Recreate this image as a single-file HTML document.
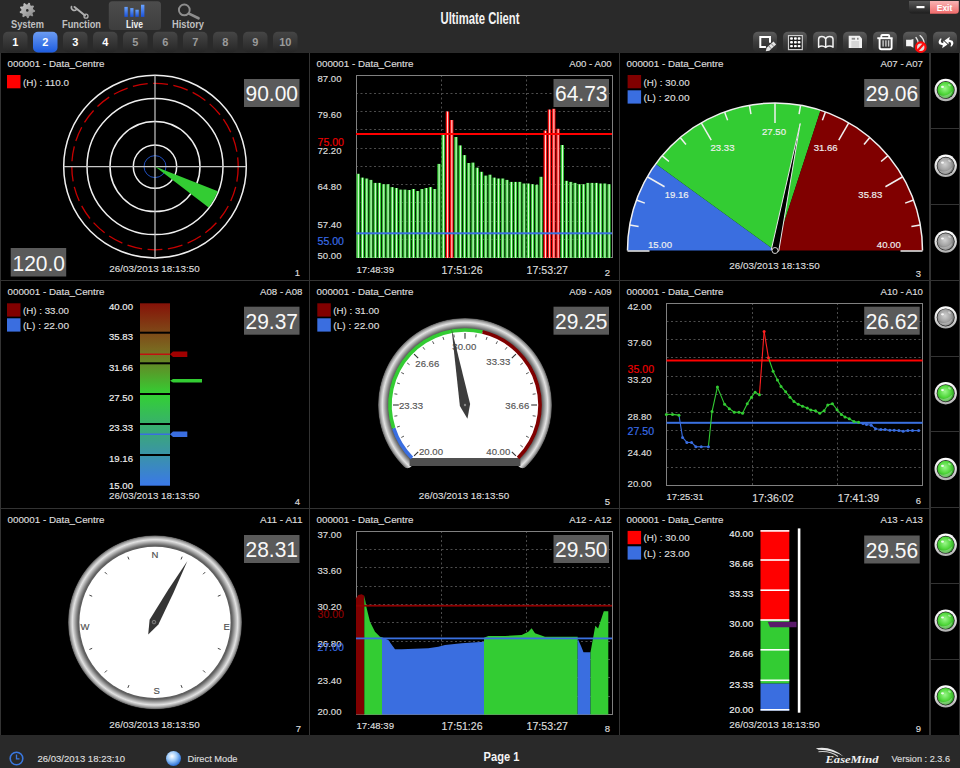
<!DOCTYPE html>
<html><head><meta charset="utf-8"><style>
html,body{margin:0;padding:0;background:#000;width:960px;height:768px;overflow:hidden}
svg{display:block;font-family:"Liberation Sans", sans-serif}
</style></head><body>
<svg width="960" height="768" viewBox="0 0 960 768">
<defs><linearGradient id="ggear" x1="0" y1="0" x2="1" y2="1"><stop offset="0" stop-color="#d0d0d0"/><stop offset="1" stop-color="#808080"/></linearGradient><linearGradient id="gtab" x1="0" y1="0" x2="0" y2="1"><stop offset="0" stop-color="#4c4c4c"/><stop offset="1" stop-color="#3e3e3e"/></linearGradient><linearGradient id="gblue" x1="0" y1="0" x2="0" y2="1"><stop offset="0" stop-color="#6aa4ff"/><stop offset="1" stop-color="#1a50d8"/></linearGradient><linearGradient id="gbtn" x1="0" y1="0" x2="0" y2="1"><stop offset="0" stop-color="#464646"/><stop offset="1" stop-color="#262626"/></linearGradient><linearGradient id="gbtnb" x1="0" y1="0" x2="0" y2="1"><stop offset="0" stop-color="#6c9cf2"/><stop offset="1" stop-color="#1d5ce0"/></linearGradient><linearGradient id="gmin" x1="0" y1="0" x2="0" y2="1"><stop offset="0" stop-color="#5a5a5a"/><stop offset="1" stop-color="#1e1e1e"/></linearGradient><linearGradient id="gexit" x1="0" y1="0" x2="0" y2="1"><stop offset="0" stop-color="#f8b4b4"/><stop offset="1" stop-color="#f06a6a"/></linearGradient><linearGradient id="gtb" x1="0" y1="0" x2="0" y2="1"><stop offset="0" stop-color="#5c5c5c"/><stop offset="0.5" stop-color="#3c3c3c"/><stop offset="1" stop-color="#2a2a2a"/></linearGradient><radialGradient id="gledg" cx="0.45" cy="0.4" r="0.6"><stop offset="0" stop-color="#9af78a"/><stop offset="0.6" stop-color="#4fd63a"/><stop offset="1" stop-color="#2a9a20"/></radialGradient><radialGradient id="gledo" cx="0.45" cy="0.4" r="0.6"><stop offset="0" stop-color="#d0d0d0"/><stop offset="0.6" stop-color="#a2a2a2"/><stop offset="1" stop-color="#6a6a6a"/></radialGradient><linearGradient id="gring" x1="0" y1="0" x2="0" y2="1"><stop offset="0" stop-color="#ffffff"/><stop offset="0.5" stop-color="#e0e0e0"/><stop offset="1" stop-color="#b0b0b0"/></linearGradient><linearGradient id="gbarg" x1="0" y1="0" x2="1" y2="0"><stop offset="0" stop-color="#1f9a1f"/><stop offset="0.28" stop-color="#3ad03a"/><stop offset="0.55" stop-color="#eaffea"/><stop offset="0.8" stop-color="#3ad03a"/><stop offset="1" stop-color="#1f9a1f"/></linearGradient><linearGradient id="gbarr" x1="0" y1="0" x2="1" y2="0"><stop offset="0" stop-color="#e00000"/><stop offset="0.28" stop-color="#ff2020"/><stop offset="0.55" stop-color="#ffeaea"/><stop offset="0.8" stop-color="#ff2020"/><stop offset="1" stop-color="#e00000"/></linearGradient><linearGradient id="gvb" x1="0" y1="0" x2="0" y2="1"><stop offset="0" stop-color="#861208"/><stop offset="0.25" stop-color="#7a6820"/><stop offset="0.5" stop-color="#33d033"/><stop offset="0.75" stop-color="#3aa08a"/><stop offset="1" stop-color="#3a78e8"/></linearGradient><radialGradient id="gdial" cx="0.5" cy="0.5" r="0.5"><stop offset="0.86" stop-color="#777"/><stop offset="0.9" stop-color="#d8d8d8"/><stop offset="0.95" stop-color="#bdbdbd"/><stop offset="1" stop-color="#555"/></radialGradient><radialGradient id="gdring" gradientUnits="userSpaceOnUse" cx="465" cy="405" r="87"><stop offset="0.868" stop-color="#5a5a5a"/><stop offset="0.886" stop-color="#626262"/><stop offset="0.909" stop-color="#909090"/><stop offset="0.932" stop-color="#c0c0c0"/><stop offset="0.95" stop-color="#e2e2e2"/><stop offset="0.975" stop-color="#a8a8a8"/><stop offset="0.992" stop-color="#707070"/><stop offset="1" stop-color="#282828"/></radialGradient><radialGradient id="gcomp" gradientUnits="userSpaceOnUse" cx="155" cy="622.3" r="87"><stop offset="0.868" stop-color="#5a5a5a"/><stop offset="0.886" stop-color="#626262"/><stop offset="0.909" stop-color="#909090"/><stop offset="0.932" stop-color="#c0c0c0"/><stop offset="0.95" stop-color="#e2e2e2"/><stop offset="0.975" stop-color="#a8a8a8"/><stop offset="0.992" stop-color="#707070"/><stop offset="1" stop-color="#282828"/></radialGradient><radialGradient id="gglobe" cx="0.4" cy="0.35" r="0.65"><stop offset="0" stop-color="#ffffff"/><stop offset="0.5" stop-color="#9ac8f8"/><stop offset="1" stop-color="#2a70d8"/></radialGradient></defs>
<rect x="0" y="0" width="960" height="53" fill="#2a2a2a"/>
<rect x="0" y="52" width="960" height="1" fill="#2b2b2b"/>
<rect x="0" y="53" width="960" height="682" fill="#000"/>
<rect x="0" y="735" width="960" height="33" fill="#292929"/>
<rect x="0" y="53" width="1" height="682" fill="#333"/>
<rect x="309" y="53" width="1" height="682" fill="#333"/>
<rect x="619" y="53" width="1" height="682" fill="#333"/>
<rect x="929" y="53" width="1" height="682" fill="#333"/>
<rect x="930" y="53" width="1" height="682" fill="#333"/>
<rect x="959" y="53" width="1" height="682" fill="#333"/>
<rect x="0" y="280" width="930" height="1" fill="#333"/>
<rect x="0" y="508" width="930" height="1" fill="#333"/>
<rect x="930" y="128" width="30" height="1" fill="#333"/>
<rect x="930" y="204" width="30" height="1" fill="#333"/>
<rect x="930" y="280" width="30" height="1" fill="#333"/>
<rect x="930" y="356" width="30" height="1" fill="#333"/>
<rect x="930" y="431" width="30" height="1" fill="#333"/>
<rect x="930" y="507" width="30" height="1" fill="#333"/>
<rect x="930" y="583" width="30" height="1" fill="#333"/>
<rect x="930" y="659" width="30" height="1" fill="#333"/>
<polygon points="35.10,10.40 34.98,11.75 32.94,12.45 32.50,13.40 33.28,15.41 32.31,16.38 30.30,15.60 29.35,16.04 28.65,18.08 27.30,18.20 26.26,16.31 25.25,16.04 23.40,17.15 22.29,16.38 22.70,14.26 22.10,13.40 19.97,13.07 19.62,11.75 21.30,10.40 21.39,9.36 19.97,7.73 20.55,6.50 22.70,6.54 23.44,5.80 23.40,3.65 24.63,3.07 26.26,4.49 27.30,4.40 28.65,2.72 29.97,3.07 30.30,5.20 31.16,5.80 33.28,5.39 34.05,6.50 32.94,8.35 33.21,9.36" fill="url(#ggear)"/>
<circle cx="27.3" cy="10.4" r="1.3" fill="#2a2a2a"/>
<text x="27.5" y="28" font-size="11" fill="#c0c0c0" text-anchor="middle" font-weight="bold" textLength="33" lengthAdjust="spacingAndGlyphs">System</text>
<g stroke="#b0b0b0" fill="none" stroke-linecap="round"><line x1="74.5" y1="7" x2="85" y2="15.5" stroke-width="2"/><path d="M71.5 6.5 A3 3 0 0 0 76.5 9.5" stroke-width="1.6"/><circle cx="86" cy="16.2" r="2" stroke-width="1.3"/></g>
<text x="81.5" y="27.5" font-size="11" fill="#c0c0c0" text-anchor="middle" font-weight="bold" textLength="39" lengthAdjust="spacingAndGlyphs">Function</text>
<rect x="108.8" y="1.3" width="52.2" height="28.7" rx="3.5" fill="url(#gtab)"/>
<rect x="124.4" y="6.9" width="3.3499999999999943" height="9.999999999999998" fill="url(#gblue)"/>
<rect x="130.25" y="8.1" width="3.25" height="8.799999999999999" fill="url(#gblue)"/>
<rect x="135.4" y="9.75" width="3.3499999999999943" height="7.149999999999999" fill="url(#gblue)"/>
<rect x="141.0" y="4.75" width="3.4000000000000057" height="12.149999999999999" fill="url(#gblue)"/>
<text x="134.5" y="27.5" font-size="11" fill="#f0f0f0" text-anchor="middle" font-weight="bold" textLength="17" lengthAdjust="spacingAndGlyphs">Live</text>
<g stroke="#8e8e8e" fill="none"><circle cx="184.3" cy="9.9" r="5.4" stroke-width="1.9"/><line x1="189" y1="13.6" x2="198.5" y2="18.3" stroke-width="2.7" stroke-linecap="round"/></g>
<text x="188" y="27.5" font-size="11" fill="#c0c0c0" text-anchor="middle" font-weight="bold" textLength="32" lengthAdjust="spacingAndGlyphs">History</text>
<text x="480" y="24.4" font-size="16.5" fill="#f4f4f4" text-anchor="middle" font-weight="bold" textLength="79" lengthAdjust="spacingAndGlyphs">Ultimate Client</text>
<rect x="3" y="31.7" width="24.5" height="20.8" rx="5" fill="url(#gbtn)"/>
<text x="15.25" y="46" font-size="11" fill="#ffffff" text-anchor="middle" font-weight="bold">1</text>
<rect x="33" y="31.7" width="24.5" height="20.8" rx="5" fill="url(#gbtnb)"/>
<text x="45.25" y="46" font-size="11" fill="#ffffff" text-anchor="middle" font-weight="bold">2</text>
<rect x="63" y="31.7" width="24.5" height="20.8" rx="5" fill="url(#gbtn)"/>
<text x="75.25" y="46" font-size="11" fill="#ffffff" text-anchor="middle" font-weight="bold">3</text>
<rect x="93" y="31.7" width="24.5" height="20.8" rx="5" fill="url(#gbtn)"/>
<text x="105.25" y="46" font-size="11" fill="#ffffff" text-anchor="middle" font-weight="bold">4</text>
<rect x="123" y="31.7" width="24.5" height="20.8" rx="5" fill="url(#gbtn)"/>
<text x="135.25" y="46" font-size="11" fill="#9a9a9a" text-anchor="middle" font-weight="bold">5</text>
<rect x="153" y="31.7" width="24.5" height="20.8" rx="5" fill="url(#gbtn)"/>
<text x="165.25" y="46" font-size="11" fill="#9a9a9a" text-anchor="middle" font-weight="bold">6</text>
<rect x="183" y="31.7" width="24.5" height="20.8" rx="5" fill="url(#gbtn)"/>
<text x="195.25" y="46" font-size="11" fill="#9a9a9a" text-anchor="middle" font-weight="bold">7</text>
<rect x="213" y="31.7" width="24.5" height="20.8" rx="5" fill="url(#gbtn)"/>
<text x="225.25" y="46" font-size="11" fill="#9a9a9a" text-anchor="middle" font-weight="bold">8</text>
<rect x="243" y="31.7" width="24.5" height="20.8" rx="5" fill="url(#gbtn)"/>
<text x="255.25" y="46" font-size="11" fill="#9a9a9a" text-anchor="middle" font-weight="bold">9</text>
<rect x="273" y="31.7" width="24.5" height="20.8" rx="5" fill="url(#gbtn)"/>
<text x="285.25" y="46" font-size="11" fill="#9a9a9a" text-anchor="middle" font-weight="bold">10</text>
<path d="M909 1 H930 V13.5 H912 Q909 13.5 909 10.5 Z" fill="url(#gmin)"/>
<path d="M930 1 H958.8 V10.5 Q958.8 13.8 955.5 13.8 H930 Z" fill="url(#gexit)"/>
<rect x="916.5" y="6" width="8" height="2.2" fill="#ffffff"/>
<text x="944.5" y="10.6" font-size="9" fill="#ffffff" text-anchor="middle" font-weight="bold" textLength="15.5" lengthAdjust="spacingAndGlyphs">Exit</text>
<rect x="753" y="31.8" width="24" height="20.7" rx="5" fill="url(#gtb)"/>
<rect x="783" y="31.8" width="24" height="20.7" rx="5" fill="url(#gtb)"/>
<rect x="813" y="31.8" width="24" height="20.7" rx="5" fill="url(#gtb)"/>
<rect x="843" y="31.8" width="24" height="20.7" rx="5" fill="url(#gtb)"/>
<rect x="873" y="31.8" width="24" height="20.7" rx="5" fill="url(#gtb)"/>
<rect x="903" y="31.8" width="24" height="20.7" rx="5" fill="url(#gtb)"/>
<rect x="933" y="31.8" width="24" height="20.7" rx="5" fill="url(#gtb)"/>
<path d="M770 42.8 V37.1 H760.3 V47.1 H765.9" fill="none" stroke="#fff" stroke-width="2"/>
<path d="M765.75 51.25 L766.6 47.76 L773.5 41.6 L776.1 44.6 L769.3 50.7 Z" fill="#e6e6e6"/>
<path d="M768.8 46.0 L771.4 48.9 M771.3 43.7 L773.9 46.6" stroke="#555" stroke-width="0.7"/>
<rect x="788.5" y="35.6" width="13.8" height="14" fill="#1e1e1e" stroke="#cfcfcf" stroke-width="1.2"/>
<rect x="790.1" y="37.3" width="2.8" height="2.4" rx="0.8" fill="#fff"/>
<rect x="790.1" y="41.099999999999994" width="2.8" height="2.4" rx="0.8" fill="#fff"/>
<rect x="790.1" y="44.9" width="2.8" height="2.4" rx="0.8" fill="#fff"/>
<rect x="794.0" y="37.3" width="2.8" height="2.4" rx="0.8" fill="#fff"/>
<rect x="794.0" y="41.099999999999994" width="2.8" height="2.4" rx="0.8" fill="#fff"/>
<rect x="794.0" y="44.9" width="2.8" height="2.4" rx="0.8" fill="#fff"/>
<rect x="797.7" y="37.3" width="2.8" height="2.4" rx="0.8" fill="#fff"/>
<rect x="797.7" y="41.099999999999994" width="2.8" height="2.4" rx="0.8" fill="#fff"/>
<rect x="797.7" y="44.9" width="2.8" height="2.4" rx="0.8" fill="#fff"/>
<path d="M818.6 47.2 V39.2 Q818.6 36.5 821.8 36.5 Q824.8 36.5 825.7 39 Q826.6 36.5 829.6 36.5 Q833 36.5 833 39.2 V47.2 Q829.5 44.8 825.7 47.4 Q822 44.8 818.6 47.2 Z M825.7 39 V47.4" fill="none" stroke="#f2f2f2" stroke-width="1.5" stroke-linejoin="round"/>
<path d="M848.7 35.8 H859.6 L862 38.4 V48.1 H848.7 Z" fill="#f0f0f0"/>
<rect x="851.7" y="37.8" width="3.4" height="1.9" fill="#8a8a8a"/>
<rect x="857" y="37.8" width="1.6" height="1.9" fill="#8a8a8a"/>
<rect x="851.3" y="41" width="7.8" height="6.8" fill="#d6d6d6"/>
<g fill="none" stroke="#fff" stroke-width="1.9" stroke-linejoin="round"><path d="M877.3 38.2 H892.6"/><path d="M881.3 38 V35.8 Q881.3 35 882.3 35 H888.2 Q889.2 35 889.2 35.8 V38"/><path d="M879.6 38.5 V47.6 Q879.6 49.3 881.3 49.3 H889.9 Q891.6 49.3 891.6 47.6 V38.5"/></g>
<rect x="882.4" y="40.3" width="1.4" height="6.3" fill="#c8c8c8"/>
<rect x="885.1999999999999" y="40.3" width="1.4" height="6.3" fill="#c8c8c8"/>
<rect x="887.9" y="40.3" width="1.4" height="6.3" fill="#c8c8c8"/>
<path d="M906.1 39.7 H910.75 L913.4 38.9 V47.8 L910.75 46.25 H906.1 Z" fill="#f4f4f4"/>
<g fill="none" stroke="#e8e8e8" stroke-width="1.3" stroke-linecap="round"><path d="M916 37.5 Q918.5 40.5 918.5 44.5"/><path d="M920 35.6 Q924 39 924.2 43.5"/></g>
<circle cx="920.75" cy="47.2" r="4.8" fill="#dcdcdc" stroke="#ff0a0a" stroke-width="2.2"/>
<line x1="923.6" y1="44" x2="917.7" y2="50.4" stroke="#ff0a0a" stroke-width="2.2"/>
<path d="M940.8 38.2 Q937.2 41.5 939.5 44.3 L942.8 45.2 L942.2 48.2 L947.5 44.6 L943.5 40.8 L943.2 43.3 L941.3 42.5 Q940.2 41 941.6 38.8 Z" fill="#fff"/>
<path d="M951.2 46.8 Q954.8 43.5 952.5 40.7 L949.2 39.8 L949.8 36.8 L944.5 40.4 L948.5 44.2 L948.8 41.7 L950.7 42.5 Q951.8 44 950.4 46.2 Z" fill="#fff"/>
<circle cx="945.7" cy="90.0" r="11.2" fill="url(#gring)"/>
<circle cx="945.7" cy="90.0" r="9" fill="#222"/>
<circle cx="945.7" cy="90.0" r="8.3" fill="url(#gledg)"/>
<ellipse cx="942.5" cy="86.9" rx="1.5" ry="1.1" fill="#fff" opacity="0.85"/>
<ellipse cx="949.5" cy="85.2" rx="1.6" ry="1" fill="#fff" opacity="0.45" transform="rotate(35 949.5 85.2)"/>
<path d="M938.8 94.4 Q945.7 98.2 952.4 91.1 Q951.2 97.5 945.5 98.4 Q940.7 98.0 938.8 94.4 Z" fill="#fff" opacity="0.3"/>
<circle cx="945.7" cy="165.8" r="11.2" fill="url(#gring)"/>
<circle cx="945.7" cy="165.8" r="9" fill="#222"/>
<circle cx="945.7" cy="165.8" r="8.3" fill="url(#gledo)"/>
<ellipse cx="942.5" cy="162.7" rx="1.5" ry="1.1" fill="#fff" opacity="0.85"/>
<ellipse cx="949.5" cy="161.0" rx="1.6" ry="1" fill="#fff" opacity="0.45" transform="rotate(35 949.5 161.0)"/>
<path d="M938.8 170.2 Q945.7 174.0 952.4 166.9 Q951.2 173.3 945.5 174.2 Q940.7 173.8 938.8 170.2 Z" fill="#fff" opacity="0.3"/>
<circle cx="945.7" cy="241.6" r="11.2" fill="url(#gring)"/>
<circle cx="945.7" cy="241.6" r="9" fill="#222"/>
<circle cx="945.7" cy="241.6" r="8.3" fill="url(#gledo)"/>
<ellipse cx="942.5" cy="238.5" rx="1.5" ry="1.1" fill="#fff" opacity="0.85"/>
<ellipse cx="949.5" cy="236.8" rx="1.6" ry="1" fill="#fff" opacity="0.45" transform="rotate(35 949.5 236.8)"/>
<path d="M938.8 246.0 Q945.7 249.8 952.4 242.7 Q951.2 249.1 945.5 250.0 Q940.7 249.6 938.8 246.0 Z" fill="#fff" opacity="0.3"/>
<circle cx="945.7" cy="317.4" r="11.2" fill="url(#gring)"/>
<circle cx="945.7" cy="317.4" r="9" fill="#222"/>
<circle cx="945.7" cy="317.4" r="8.3" fill="url(#gledo)"/>
<ellipse cx="942.5" cy="314.3" rx="1.5" ry="1.1" fill="#fff" opacity="0.85"/>
<ellipse cx="949.5" cy="312.6" rx="1.6" ry="1" fill="#fff" opacity="0.45" transform="rotate(35 949.5 312.6)"/>
<path d="M938.8 321.8 Q945.7 325.6 952.4 318.5 Q951.2 324.9 945.5 325.8 Q940.7 325.4 938.8 321.8 Z" fill="#fff" opacity="0.3"/>
<circle cx="945.7" cy="393.2" r="11.2" fill="url(#gring)"/>
<circle cx="945.7" cy="393.2" r="9" fill="#222"/>
<circle cx="945.7" cy="393.2" r="8.3" fill="url(#gledg)"/>
<ellipse cx="942.5" cy="390.1" rx="1.5" ry="1.1" fill="#fff" opacity="0.85"/>
<ellipse cx="949.5" cy="388.4" rx="1.6" ry="1" fill="#fff" opacity="0.45" transform="rotate(35 949.5 388.4)"/>
<path d="M938.8 397.6 Q945.7 401.4 952.4 394.3 Q951.2 400.7 945.5 401.6 Q940.7 401.2 938.8 397.6 Z" fill="#fff" opacity="0.3"/>
<circle cx="945.7" cy="469.0" r="11.2" fill="url(#gring)"/>
<circle cx="945.7" cy="469.0" r="9" fill="#222"/>
<circle cx="945.7" cy="469.0" r="8.3" fill="url(#gledg)"/>
<ellipse cx="942.5" cy="465.9" rx="1.5" ry="1.1" fill="#fff" opacity="0.85"/>
<ellipse cx="949.5" cy="464.2" rx="1.6" ry="1" fill="#fff" opacity="0.45" transform="rotate(35 949.5 464.2)"/>
<path d="M938.8 473.4 Q945.7 477.2 952.4 470.1 Q951.2 476.5 945.5 477.4 Q940.7 477.0 938.8 473.4 Z" fill="#fff" opacity="0.3"/>
<circle cx="945.7" cy="544.8" r="11.2" fill="url(#gring)"/>
<circle cx="945.7" cy="544.8" r="9" fill="#222"/>
<circle cx="945.7" cy="544.8" r="8.3" fill="url(#gledg)"/>
<ellipse cx="942.5" cy="541.7" rx="1.5" ry="1.1" fill="#fff" opacity="0.85"/>
<ellipse cx="949.5" cy="540.0" rx="1.6" ry="1" fill="#fff" opacity="0.45" transform="rotate(35 949.5 540.0)"/>
<path d="M938.8 549.2 Q945.7 553.0 952.4 545.9 Q951.2 552.3 945.5 553.2 Q940.7 552.8 938.8 549.2 Z" fill="#fff" opacity="0.3"/>
<circle cx="945.7" cy="620.6" r="11.2" fill="url(#gring)"/>
<circle cx="945.7" cy="620.6" r="9" fill="#222"/>
<circle cx="945.7" cy="620.6" r="8.3" fill="url(#gledg)"/>
<ellipse cx="942.5" cy="617.5" rx="1.5" ry="1.1" fill="#fff" opacity="0.85"/>
<ellipse cx="949.5" cy="615.8" rx="1.6" ry="1" fill="#fff" opacity="0.45" transform="rotate(35 949.5 615.8)"/>
<path d="M938.8 625.0 Q945.7 628.8 952.4 621.7 Q951.2 628.1 945.5 629.0 Q940.7 628.6 938.8 625.0 Z" fill="#fff" opacity="0.3"/>
<circle cx="945.7" cy="696.4" r="11.2" fill="url(#gring)"/>
<circle cx="945.7" cy="696.4" r="9" fill="#222"/>
<circle cx="945.7" cy="696.4" r="8.3" fill="url(#gledg)"/>
<ellipse cx="942.5" cy="693.3" rx="1.5" ry="1.1" fill="#fff" opacity="0.85"/>
<ellipse cx="949.5" cy="691.6" rx="1.6" ry="1" fill="#fff" opacity="0.45" transform="rotate(35 949.5 691.6)"/>
<path d="M938.8 700.8 Q945.7 704.6 952.4 697.5 Q951.2 703.9 945.5 704.8 Q940.7 704.4 938.8 700.8 Z" fill="#fff" opacity="0.3"/>
<text x="7.5" y="67" font-size="9.5" fill="#dcdcdc" text-anchor="start" textLength="97" lengthAdjust="spacingAndGlyphs" stroke="#dcdcdc" stroke-width="0.16">000001 - Data_Centre</text>
<rect x="7" y="75" width="13.5" height="13.3" fill="#ff0000"/>
<text x="23" y="85.5" font-size="9.5" fill="#dcdcdc" text-anchor="start" textLength="46" lengthAdjust="spacingAndGlyphs" stroke="#dcdcdc" stroke-width="0.16">(H) : 110.0</text>
<rect x="244" y="79" width="55.5" height="28" fill="#5a5a5a"/>
<text x="271.75" y="101.4" font-size="22" fill="#f8f8f8" text-anchor="middle" textLength="52.5" lengthAdjust="spacingAndGlyphs">90.00</text>
<rect x="10.7" y="248" width="55.5" height="28.5" fill="#5a5a5a"/>
<text x="38.75" y="271.2" font-size="22" fill="#f8f8f8" text-anchor="middle" textLength="52.5" lengthAdjust="spacingAndGlyphs">120.0</text>
<circle cx="155" cy="166.6" r="91.3" fill="none" stroke="#f0f0f0" stroke-width="1.5"/>
<circle cx="155" cy="166.6" r="68" fill="none" stroke="#f0f0f0" stroke-width="1.5"/>
<circle cx="155" cy="166.6" r="45" fill="none" stroke="#f0f0f0" stroke-width="1.5"/>
<circle cx="155" cy="166.6" r="21.7" fill="none" stroke="#f0f0f0" stroke-width="1.5"/>
<circle cx="155" cy="166.6" r="83.2" fill="none" stroke="#c80000" stroke-width="1.3" stroke-dasharray="15 5.5"/>
<circle cx="155" cy="166.6" r="11" fill="none" stroke="#2050c0" stroke-width="1"/>
<line x1="63.5" y1="166.6" x2="246.5" y2="166.6" stroke="#c8c8c8" stroke-width="1.2"/>
<line x1="155" y1="75" x2="155" y2="258.5" stroke="#c8c8c8" stroke-width="1.2"/>
<path d="M155 166.6 L217.85 191.23 A67.5 67.5 0 0 1 208.62 207.60 Z" fill="#33cc33"/>
<text x="154.5" y="271.5" font-size="9.5" fill="#dcdcdc" text-anchor="middle" textLength="90.5" lengthAdjust="spacingAndGlyphs" stroke="#dcdcdc" stroke-width="0.16">26/03/2013 18:13:50</text>
<text x="300" y="275.5" font-size="9.5" fill="#dcdcdc" text-anchor="end" stroke="#dcdcdc" stroke-width="0.16">1</text>
<text x="316.5" y="67" font-size="9.5" fill="#dcdcdc" text-anchor="start" textLength="97" lengthAdjust="spacingAndGlyphs" stroke="#dcdcdc" stroke-width="0.16">000001 - Data_Centre</text>
<text x="611.7" y="67" font-size="9.5" fill="#dcdcdc" text-anchor="end" textLength="42.5" lengthAdjust="spacingAndGlyphs" stroke="#dcdcdc" stroke-width="0.16">A00 - A00</text>
<line x1="356" y1="93.5" x2="612" y2="93.5" stroke="#4c4c4c" stroke-width="1" stroke-dasharray="2 2.5"/>
<line x1="356" y1="111.5" x2="612" y2="111.5" stroke="#4c4c4c" stroke-width="1" stroke-dasharray="2 2.5"/>
<line x1="356" y1="129.5" x2="612" y2="129.5" stroke="#4c4c4c" stroke-width="1" stroke-dasharray="2 2.5"/>
<line x1="356" y1="148.5" x2="612" y2="148.5" stroke="#4c4c4c" stroke-width="1" stroke-dasharray="2 2.5"/>
<line x1="356" y1="166.5" x2="612" y2="166.5" stroke="#4c4c4c" stroke-width="1" stroke-dasharray="2 2.5"/>
<line x1="356" y1="184.5" x2="612" y2="184.5" stroke="#4c4c4c" stroke-width="1" stroke-dasharray="2 2.5"/>
<line x1="356" y1="202.5" x2="612" y2="202.5" stroke="#4c4c4c" stroke-width="1" stroke-dasharray="2 2.5"/>
<line x1="356" y1="221.5" x2="612" y2="221.5" stroke="#4c4c4c" stroke-width="1" stroke-dasharray="2 2.5"/>
<line x1="356" y1="239.5" x2="612" y2="239.5" stroke="#4c4c4c" stroke-width="1" stroke-dasharray="2 2.5"/>
<line x1="441.5" y1="75" x2="441.5" y2="257.5" stroke="#4c4c4c" stroke-width="1" stroke-dasharray="2 2.5"/>
<line x1="526.5" y1="75" x2="526.5" y2="257.5" stroke="#4c4c4c" stroke-width="1" stroke-dasharray="2 2.5"/>
<rect x="356.5" y="75.5" width="256" height="182" fill="none" stroke="#808080" stroke-width="1"/>
<rect x="356.40" y="173.8" width="3.5" height="84.2" fill="url(#gbarg)"/>
<rect x="360.65" y="177.6" width="3.5" height="80.4" fill="url(#gbarg)"/>
<rect x="364.90" y="178.5" width="3.5" height="79.5" fill="url(#gbarg)"/>
<rect x="369.16" y="179.9" width="3.5" height="78.1" fill="url(#gbarg)"/>
<rect x="373.41" y="182.9" width="3.5" height="75.1" fill="url(#gbarg)"/>
<rect x="377.66" y="182.9" width="3.5" height="75.1" fill="url(#gbarg)"/>
<rect x="381.91" y="184.2" width="3.5" height="73.8" fill="url(#gbarg)"/>
<rect x="386.16" y="184.2" width="3.5" height="73.8" fill="url(#gbarg)"/>
<rect x="390.42" y="187.1" width="3.5" height="70.9" fill="url(#gbarg)"/>
<rect x="394.67" y="188.0" width="3.5" height="70.0" fill="url(#gbarg)"/>
<rect x="398.92" y="189.6" width="3.5" height="68.4" fill="url(#gbarg)"/>
<rect x="403.17" y="189.6" width="3.5" height="68.4" fill="url(#gbarg)"/>
<rect x="407.42" y="190.0" width="3.5" height="68.0" fill="url(#gbarg)"/>
<rect x="411.68" y="189.0" width="3.5" height="69.0" fill="url(#gbarg)"/>
<rect x="415.93" y="191.0" width="3.5" height="67.0" fill="url(#gbarg)"/>
<rect x="420.18" y="189.0" width="3.5" height="69.0" fill="url(#gbarg)"/>
<rect x="424.43" y="188.0" width="3.5" height="70.0" fill="url(#gbarg)"/>
<rect x="428.68" y="187.1" width="3.5" height="70.9" fill="url(#gbarg)"/>
<rect x="432.94" y="189.0" width="3.5" height="69.0" fill="url(#gbarg)"/>
<rect x="437.19" y="163.9" width="3.5" height="94.1" fill="url(#gbarg)"/>
<rect x="441.44" y="134.9" width="3.5" height="123.1" fill="url(#gbarg)"/>
<rect x="445.69" y="111.5" width="3.5" height="146.5" fill="url(#gbarr)"/>
<rect x="449.94" y="120.0" width="3.5" height="138.0" fill="url(#gbarr)"/>
<rect x="454.20" y="137.0" width="3.5" height="121.0" fill="url(#gbarg)"/>
<rect x="458.45" y="145.4" width="3.5" height="112.6" fill="url(#gbarg)"/>
<rect x="462.70" y="155.1" width="3.5" height="102.9" fill="url(#gbarg)"/>
<rect x="466.95" y="163.0" width="3.5" height="95.0" fill="url(#gbarg)"/>
<rect x="471.20" y="162.6" width="3.5" height="95.4" fill="url(#gbarg)"/>
<rect x="475.46" y="167.7" width="3.5" height="90.3" fill="url(#gbarg)"/>
<rect x="479.71" y="171.8" width="3.5" height="86.2" fill="url(#gbarg)"/>
<rect x="483.96" y="175.6" width="3.5" height="82.4" fill="url(#gbarg)"/>
<rect x="488.21" y="174.7" width="3.5" height="83.3" fill="url(#gbarg)"/>
<rect x="492.46" y="177.6" width="3.5" height="80.4" fill="url(#gbarg)"/>
<rect x="496.72" y="178.5" width="3.5" height="79.5" fill="url(#gbarg)"/>
<rect x="500.97" y="178.5" width="3.5" height="79.5" fill="url(#gbarg)"/>
<rect x="505.22" y="179.9" width="3.5" height="78.1" fill="url(#gbarg)"/>
<rect x="509.47" y="181.9" width="3.5" height="76.1" fill="url(#gbarg)"/>
<rect x="513.72" y="181.9" width="3.5" height="76.1" fill="url(#gbarg)"/>
<rect x="517.98" y="181.9" width="3.5" height="76.1" fill="url(#gbarg)"/>
<rect x="522.23" y="183.5" width="3.5" height="74.5" fill="url(#gbarg)"/>
<rect x="526.48" y="183.5" width="3.5" height="74.5" fill="url(#gbarg)"/>
<rect x="530.73" y="184.2" width="3.5" height="73.8" fill="url(#gbarg)"/>
<rect x="534.98" y="184.9" width="3.5" height="73.1" fill="url(#gbarg)"/>
<rect x="539.24" y="176.8" width="3.5" height="81.2" fill="url(#gbarg)"/>
<rect x="543.49" y="130.5" width="3.5" height="127.5" fill="url(#gbarr)"/>
<rect x="547.74" y="109.5" width="3.5" height="148.5" fill="url(#gbarr)"/>
<rect x="551.99" y="108.8" width="3.5" height="149.2" fill="url(#gbarr)"/>
<rect x="556.24" y="128.8" width="3.5" height="129.2" fill="url(#gbarr)"/>
<rect x="560.50" y="145.0" width="3.5" height="113.0" fill="url(#gbarg)"/>
<rect x="564.75" y="180.8" width="3.5" height="77.2" fill="url(#gbarg)"/>
<rect x="569.00" y="181.9" width="3.5" height="76.1" fill="url(#gbarg)"/>
<rect x="573.25" y="182.9" width="3.5" height="75.1" fill="url(#gbarg)"/>
<rect x="577.50" y="184.2" width="3.5" height="73.8" fill="url(#gbarg)"/>
<rect x="581.76" y="184.2" width="3.5" height="73.8" fill="url(#gbarg)"/>
<rect x="586.01" y="182.9" width="3.5" height="75.1" fill="url(#gbarg)"/>
<rect x="590.26" y="182.9" width="3.5" height="75.1" fill="url(#gbarg)"/>
<rect x="594.51" y="182.9" width="3.5" height="75.1" fill="url(#gbarg)"/>
<rect x="598.76" y="183.5" width="3.5" height="74.5" fill="url(#gbarg)"/>
<rect x="603.02" y="183.5" width="3.5" height="74.5" fill="url(#gbarg)"/>
<rect x="607.27" y="184.2" width="3.5" height="73.8" fill="url(#gbarg)"/>
<rect x="356" y="133" width="256" height="2" fill="#ff0000"/>
<rect x="356" y="232.3" width="256" height="2" fill="#3a70e0"/>
<text x="317.5" y="81.5" font-size="9.5" fill="#dcdcdc" text-anchor="start" textLength="24" lengthAdjust="spacingAndGlyphs" stroke="#dcdcdc" stroke-width="0.16">87.00</text>
<text x="317.5" y="117.5" font-size="9.5" fill="#dcdcdc" text-anchor="start" textLength="24" lengthAdjust="spacingAndGlyphs" stroke="#dcdcdc" stroke-width="0.16">79.60</text>
<text x="317.5" y="154" font-size="9.5" fill="#dcdcdc" text-anchor="start" textLength="24" lengthAdjust="spacingAndGlyphs" stroke="#dcdcdc" stroke-width="0.16">72.20</text>
<text x="317.5" y="190" font-size="9.5" fill="#dcdcdc" text-anchor="start" textLength="24" lengthAdjust="spacingAndGlyphs" stroke="#dcdcdc" stroke-width="0.16">64.80</text>
<text x="317.5" y="227.5" font-size="9.5" fill="#dcdcdc" text-anchor="start" textLength="24" lengthAdjust="spacingAndGlyphs" stroke="#dcdcdc" stroke-width="0.16">57.40</text>
<text x="317.5" y="258.5" font-size="9.5" fill="#dcdcdc" text-anchor="start" textLength="24" lengthAdjust="spacingAndGlyphs" stroke="#dcdcdc" stroke-width="0.16">50.00</text>
<text x="317.5" y="146" font-size="10.5" fill="#ee0000" text-anchor="start" textLength="26.5" lengthAdjust="spacingAndGlyphs" stroke="#ee0000" stroke-width="0.16">75.00</text>
<text x="317.5" y="245" font-size="10.5" fill="#3a6ee8" text-anchor="start" textLength="26.5" lengthAdjust="spacingAndGlyphs" stroke="#3a6ee8" stroke-width="0.16">55.00</text>
<text x="356.5" y="273" font-size="9.5" fill="#dcdcdc" text-anchor="start" textLength="37.5" lengthAdjust="spacingAndGlyphs" stroke="#dcdcdc" stroke-width="0.16">17:48:39</text>
<text x="441.5" y="274.3" font-size="10.8" fill="#dcdcdc" text-anchor="start" textLength="41" lengthAdjust="spacingAndGlyphs" stroke="#dcdcdc" stroke-width="0.16">17:51:26</text>
<text x="526.5" y="274.3" font-size="10.8" fill="#dcdcdc" text-anchor="start" textLength="41.5" lengthAdjust="spacingAndGlyphs" stroke="#dcdcdc" stroke-width="0.16">17:53:27</text>
<text x="610" y="276" font-size="9.5" fill="#dcdcdc" text-anchor="end" stroke="#dcdcdc" stroke-width="0.16">2</text>
<rect x="553.5" y="79" width="55.5" height="28" fill="#5a5a5a"/>
<text x="581.25" y="101.4" font-size="22" fill="#f8f8f8" text-anchor="middle" textLength="52.5" lengthAdjust="spacingAndGlyphs">64.73</text>
<text x="626.5" y="67" font-size="9.5" fill="#dcdcdc" text-anchor="start" textLength="97" lengthAdjust="spacingAndGlyphs" stroke="#dcdcdc" stroke-width="0.16">000001 - Data_Centre</text>
<text x="923" y="67" font-size="9.5" fill="#dcdcdc" text-anchor="end" textLength="42.5" lengthAdjust="spacingAndGlyphs" stroke="#dcdcdc" stroke-width="0.16">A07 - A07</text>
<rect x="627.6" y="75" width="13.5" height="13.3" fill="#800000"/>
<text x="643.6" y="85.5" font-size="9.5" fill="#dcdcdc" text-anchor="start" textLength="46" lengthAdjust="spacingAndGlyphs" stroke="#dcdcdc" stroke-width="0.16">(H) : 30.00</text>
<rect x="627.6" y="90.3" width="13.5" height="13.3" fill="#3a6ee0"/>
<text x="643.6" y="100.8" font-size="9.5" fill="#dcdcdc" text-anchor="start" textLength="46" lengthAdjust="spacingAndGlyphs" stroke="#dcdcdc" stroke-width="0.16">(L) : 20.00</text>
<rect x="864.2" y="79" width="55.5" height="28" fill="#5a5a5a"/>
<text x="891.95" y="101.4" font-size="22" fill="#f8f8f8" text-anchor="middle" textLength="52.5" lengthAdjust="spacingAndGlyphs">29.06</text>
<path d="M775 250.5 L627.50 250.50 A147.5 147.5 0 0 1 655.67 163.80 Z" fill="#3a6ee0"/>
<path d="M775 250.5 L655.67 163.80 A147.5 147.5 0 0 1 820.58 110.22 Z" fill="#33cc33"/>
<path d="M775 250.5 L820.58 110.22 A147.5 147.5 0 0 1 922.50 250.50 Z" fill="#800000"/>
<path d="M627.5 250.5 A147.5 147.5 0 0 1 922.5 250.5" fill="none" stroke="#f0f0f0" stroke-width="1.5"/>
<line x1="627.5" y1="251.0" x2="649.5" y2="251.0" stroke="#f0f0f0" stroke-width="1.5"/>
<line x1="900.5" y1="251.0" x2="922.5" y2="251.0" stroke="#f0f0f0" stroke-width="1.5"/>
<line x1="629.74" y1="224.89" x2="638.60" y2="226.45" stroke="#f0f0f0" stroke-width="1.5"/>
<line x1="636.40" y1="200.05" x2="644.85" y2="203.13" stroke="#f0f0f0" stroke-width="1.5"/>
<line x1="647.26" y1="176.75" x2="664.58" y2="186.75" stroke="#f0f0f0" stroke-width="1.5"/>
<line x1="662.01" y1="155.69" x2="668.90" y2="161.47" stroke="#f0f0f0" stroke-width="1.5"/>
<line x1="680.19" y1="137.51" x2="685.97" y2="144.40" stroke="#f0f0f0" stroke-width="1.5"/>
<line x1="701.25" y1="122.76" x2="711.25" y2="140.08" stroke="#f0f0f0" stroke-width="1.5"/>
<line x1="724.55" y1="111.90" x2="727.63" y2="120.35" stroke="#f0f0f0" stroke-width="1.5"/>
<line x1="749.39" y1="105.24" x2="750.95" y2="114.10" stroke="#f0f0f0" stroke-width="1.5"/>
<line x1="775.00" y1="103.00" x2="775.00" y2="123.00" stroke="#f0f0f0" stroke-width="1.5"/>
<line x1="800.61" y1="105.24" x2="799.05" y2="114.10" stroke="#f0f0f0" stroke-width="1.5"/>
<line x1="825.45" y1="111.90" x2="822.37" y2="120.35" stroke="#f0f0f0" stroke-width="1.5"/>
<line x1="848.75" y1="122.76" x2="838.75" y2="140.08" stroke="#f0f0f0" stroke-width="1.5"/>
<line x1="869.81" y1="137.51" x2="864.03" y2="144.40" stroke="#f0f0f0" stroke-width="1.5"/>
<line x1="887.99" y1="155.69" x2="881.10" y2="161.47" stroke="#f0f0f0" stroke-width="1.5"/>
<line x1="902.74" y1="176.75" x2="885.42" y2="186.75" stroke="#f0f0f0" stroke-width="1.5"/>
<line x1="913.60" y1="200.05" x2="905.15" y2="203.13" stroke="#f0f0f0" stroke-width="1.5"/>
<line x1="920.26" y1="224.89" x2="911.40" y2="226.45" stroke="#f0f0f0" stroke-width="1.5"/>
<text x="660" y="248" font-size="9.5" fill="#f0f0f0" text-anchor="middle" textLength="24" lengthAdjust="spacingAndGlyphs" stroke="#f0f0f0" stroke-width="0.16">15.00</text>
<text x="676.7" y="197.5" font-size="9.5" fill="#f0f0f0" text-anchor="middle" textLength="24" lengthAdjust="spacingAndGlyphs" stroke="#f0f0f0" stroke-width="0.16">19.16</text>
<text x="722.5" y="151" font-size="9.5" fill="#f0f0f0" text-anchor="middle" textLength="24" lengthAdjust="spacingAndGlyphs" stroke="#f0f0f0" stroke-width="0.16">23.33</text>
<text x="774" y="134.5" font-size="9.5" fill="#f0f0f0" text-anchor="middle" textLength="24" lengthAdjust="spacingAndGlyphs" stroke="#f0f0f0" stroke-width="0.16">27.50</text>
<text x="825.7" y="151" font-size="9.5" fill="#f0f0f0" text-anchor="middle" textLength="24" lengthAdjust="spacingAndGlyphs" stroke="#f0f0f0" stroke-width="0.16">31.66</text>
<text x="870.3" y="197.5" font-size="9.5" fill="#f0f0f0" text-anchor="middle" textLength="24" lengthAdjust="spacingAndGlyphs" stroke="#f0f0f0" stroke-width="0.16">35.83</text>
<text x="888.8" y="248" font-size="9.5" fill="#f0f0f0" text-anchor="middle" textLength="24" lengthAdjust="spacingAndGlyphs" stroke="#f0f0f0" stroke-width="0.16">40.00</text>
<path d="M778.73 251.24 L800.20 123.50 L771.27 249.76 Z" fill="#000" stroke="#e8e8e8" stroke-width="1"/>
<circle cx="775" cy="250.5" r="3" fill="#000" stroke="#ccc" stroke-width="1"/>
<text x="774.5" y="268.5" font-size="9.5" fill="#dcdcdc" text-anchor="middle" textLength="90.5" lengthAdjust="spacingAndGlyphs" stroke="#dcdcdc" stroke-width="0.16">26/03/2013 18:13:50</text>
<text x="921" y="276.5" font-size="9.5" fill="#dcdcdc" text-anchor="end" stroke="#dcdcdc" stroke-width="0.16">3</text>
<text x="7.5" y="295" font-size="9.5" fill="#dcdcdc" text-anchor="start" textLength="97" lengthAdjust="spacingAndGlyphs" stroke="#dcdcdc" stroke-width="0.16">000001 - Data_Centre</text>
<text x="302.5" y="295" font-size="9.5" fill="#dcdcdc" text-anchor="end" textLength="42.5" lengthAdjust="spacingAndGlyphs" stroke="#dcdcdc" stroke-width="0.16">A08 - A08</text>
<rect x="7" y="303.3" width="13.5" height="13.3" fill="#800000"/>
<text x="23" y="313.8" font-size="9.5" fill="#dcdcdc" text-anchor="start" textLength="46" lengthAdjust="spacingAndGlyphs" stroke="#dcdcdc" stroke-width="0.16">(H) : 33.00</text>
<rect x="7" y="318.3" width="13.5" height="13.3" fill="#3a6ee0"/>
<text x="23" y="328.8" font-size="9.5" fill="#dcdcdc" text-anchor="start" textLength="46" lengthAdjust="spacingAndGlyphs" stroke="#dcdcdc" stroke-width="0.16">(L) : 22.00</text>
<rect x="244" y="306.7" width="55.5" height="28" fill="#5a5a5a"/>
<text x="271.75" y="329.09999999999997" font-size="22" fill="#f8f8f8" text-anchor="middle" textLength="52.5" lengthAdjust="spacingAndGlyphs">29.37</text>
<rect x="140" y="303.3" width="30" height="182.4" fill="url(#gvb)"/>
<rect x="140" y="331.7" width="30" height="2" fill="#000"/>
<rect x="140" y="362.3" width="30" height="2" fill="#000"/>
<rect x="140" y="393" width="30" height="2" fill="#000"/>
<rect x="140" y="423" width="30" height="2" fill="#000"/>
<rect x="140" y="454" width="30" height="2" fill="#000"/>
<text x="109" y="310.3" font-size="9.5" fill="#f0f0f0" text-anchor="start" textLength="24" lengthAdjust="spacingAndGlyphs" stroke="#f0f0f0" stroke-width="0.16">40.00</text>
<text x="109" y="340.3" font-size="9.5" fill="#f0f0f0" text-anchor="start" textLength="24" lengthAdjust="spacingAndGlyphs" stroke="#f0f0f0" stroke-width="0.16">35.83</text>
<text x="109" y="371" font-size="9.5" fill="#f0f0f0" text-anchor="start" textLength="24" lengthAdjust="spacingAndGlyphs" stroke="#f0f0f0" stroke-width="0.16">31.66</text>
<text x="109" y="401.3" font-size="9.5" fill="#f0f0f0" text-anchor="start" textLength="24" lengthAdjust="spacingAndGlyphs" stroke="#f0f0f0" stroke-width="0.16">27.50</text>
<text x="109" y="431.3" font-size="9.5" fill="#f0f0f0" text-anchor="start" textLength="24" lengthAdjust="spacingAndGlyphs" stroke="#f0f0f0" stroke-width="0.16">23.33</text>
<text x="109" y="462" font-size="9.5" fill="#f0f0f0" text-anchor="start" textLength="24" lengthAdjust="spacingAndGlyphs" stroke="#f0f0f0" stroke-width="0.16">19.16</text>
<text x="109" y="488.5" font-size="9.5" fill="#f0f0f0" text-anchor="start" textLength="24" lengthAdjust="spacingAndGlyphs" stroke="#f0f0f0" stroke-width="0.16">15.00</text>
<rect x="140" y="353.5" width="30" height="1.5" fill="#c01010"/>
<path d="M170 354.3 L173 351.5 H187.3 V357 H173 Z" fill="#a00000"/>
<path d="M170 380.7 L173 379 H202 V382.5 H173 Z" fill="#33cc33"/>
<rect x="140" y="433.5" width="30" height="1.5" fill="#3a6ee0"/>
<path d="M170 434.3 L173 431.5 H187.3 V437 H173 Z" fill="#3a6ee0"/>
<text x="109" y="499.3" font-size="9.5" fill="#dcdcdc" text-anchor="start" textLength="90.5" lengthAdjust="spacingAndGlyphs" stroke="#dcdcdc" stroke-width="0.16">26/03/2013 18:13:50</text>
<text x="300" y="504.5" font-size="9.5" fill="#dcdcdc" text-anchor="end" stroke="#dcdcdc" stroke-width="0.16">4</text>
<text x="316.5" y="295" font-size="9.5" fill="#dcdcdc" text-anchor="start" textLength="97" lengthAdjust="spacingAndGlyphs" stroke="#dcdcdc" stroke-width="0.16">000001 - Data_Centre</text>
<text x="611.7" y="295" font-size="9.5" fill="#dcdcdc" text-anchor="end" textLength="42.5" lengthAdjust="spacingAndGlyphs" stroke="#dcdcdc" stroke-width="0.16">A09 - A09</text>
<rect x="317.3" y="303.3" width="13.5" height="13.3" fill="#800000"/>
<text x="333.3" y="313.8" font-size="9.5" fill="#dcdcdc" text-anchor="start" textLength="46" lengthAdjust="spacingAndGlyphs" stroke="#dcdcdc" stroke-width="0.16">(H) : 31.00</text>
<rect x="317.3" y="318.3" width="13.5" height="13.3" fill="#3a6ee0"/>
<text x="333.3" y="328.8" font-size="9.5" fill="#dcdcdc" text-anchor="start" textLength="46" lengthAdjust="spacingAndGlyphs" stroke="#dcdcdc" stroke-width="0.16">(L) : 22.00</text>
<rect x="553.5" y="306.7" width="55.5" height="28" fill="#5a5a5a"/>
<text x="581.25" y="329.09999999999997" font-size="22" fill="#f8f8f8" text-anchor="middle" textLength="52.5" lengthAdjust="spacingAndGlyphs">29.25</text>
<path d="M407.37 462.63 A81.5 81.5 0 1 1 522.63 462.63" fill="none" stroke="url(#gdring)" stroke-width="11" stroke-linecap="round"/>
<path d="M411.61 458.39 A75.5 75.5 0 1 1 518.39 458.39 Z" fill="#ffffff"/>
<rect x="409.61343802041563" y="458" width="110.77312395916874" height="8" fill="#505050"/>
<path d="M411.97 458.03 A75 75 0 0 1 393.67 428.18" fill="none" stroke="#3a6ee0" stroke-width="3.6"/>
<path d="M393.67 428.18 A75 75 0 0 1 482.51 332.07" fill="none" stroke="#33cc33" stroke-width="3.6"/>
<path d="M482.51 332.07 A75 75 0 0 1 518.03 458.03" fill="none" stroke="#800000" stroke-width="3.6"/>
<line x1="414.09" y1="455.91" x2="418.19" y2="451.81" stroke="#333" stroke-width="1.1"/>
<line x1="407.16" y1="447.03" x2="409.58" y2="445.26" stroke="#555" stroke-width="1"/>
<line x1="401.29" y1="437.46" x2="403.97" y2="436.10" stroke="#555" stroke-width="1"/>
<line x1="397.00" y1="427.09" x2="399.85" y2="426.17" stroke="#555" stroke-width="1"/>
<line x1="394.38" y1="416.19" x2="397.34" y2="415.72" stroke="#555" stroke-width="1"/>
<line x1="393.00" y1="405.00" x2="398.80" y2="405.00" stroke="#333" stroke-width="1.1"/>
<line x1="394.38" y1="393.81" x2="397.34" y2="394.28" stroke="#555" stroke-width="1"/>
<line x1="397.00" y1="382.91" x2="399.85" y2="383.83" stroke="#555" stroke-width="1"/>
<line x1="401.29" y1="372.54" x2="403.97" y2="373.90" stroke="#555" stroke-width="1"/>
<line x1="407.16" y1="362.97" x2="409.58" y2="364.74" stroke="#555" stroke-width="1"/>
<line x1="414.09" y1="354.09" x2="418.19" y2="358.19" stroke="#333" stroke-width="1.1"/>
<line x1="422.97" y1="347.16" x2="424.74" y2="349.58" stroke="#555" stroke-width="1"/>
<line x1="432.54" y1="341.29" x2="433.90" y2="343.97" stroke="#555" stroke-width="1"/>
<line x1="442.91" y1="337.00" x2="443.83" y2="339.85" stroke="#555" stroke-width="1"/>
<line x1="453.81" y1="334.38" x2="454.28" y2="337.34" stroke="#555" stroke-width="1"/>
<line x1="465.00" y1="333.00" x2="465.00" y2="338.80" stroke="#333" stroke-width="1.1"/>
<line x1="476.19" y1="334.38" x2="475.72" y2="337.34" stroke="#555" stroke-width="1"/>
<line x1="487.09" y1="337.00" x2="486.17" y2="339.85" stroke="#555" stroke-width="1"/>
<line x1="497.46" y1="341.29" x2="496.10" y2="343.97" stroke="#555" stroke-width="1"/>
<line x1="507.03" y1="347.16" x2="505.26" y2="349.58" stroke="#555" stroke-width="1"/>
<line x1="515.91" y1="354.09" x2="511.81" y2="358.19" stroke="#333" stroke-width="1.1"/>
<line x1="522.84" y1="362.97" x2="520.42" y2="364.74" stroke="#555" stroke-width="1"/>
<line x1="528.71" y1="372.54" x2="526.03" y2="373.90" stroke="#555" stroke-width="1"/>
<line x1="533.00" y1="382.91" x2="530.15" y2="383.83" stroke="#555" stroke-width="1"/>
<line x1="535.62" y1="393.81" x2="532.66" y2="394.28" stroke="#555" stroke-width="1"/>
<line x1="537.00" y1="405.00" x2="531.20" y2="405.00" stroke="#333" stroke-width="1.1"/>
<line x1="535.62" y1="416.19" x2="532.66" y2="415.72" stroke="#555" stroke-width="1"/>
<line x1="533.00" y1="427.09" x2="530.15" y2="426.17" stroke="#555" stroke-width="1"/>
<line x1="528.71" y1="437.46" x2="526.03" y2="436.10" stroke="#555" stroke-width="1"/>
<line x1="522.84" y1="447.03" x2="520.42" y2="445.26" stroke="#555" stroke-width="1"/>
<line x1="515.91" y1="455.91" x2="511.81" y2="451.81" stroke="#333" stroke-width="1.1"/>
<text x="431" y="454.5" font-size="9.5" fill="#555555" text-anchor="middle" textLength="24" lengthAdjust="spacingAndGlyphs" stroke="#555555" stroke-width="0.16">20.00</text>
<text x="411" y="408.5" font-size="9.5" fill="#555555" text-anchor="middle" textLength="24" lengthAdjust="spacingAndGlyphs" stroke="#555555" stroke-width="0.16">23.33</text>
<text x="427.3" y="367" font-size="9.5" fill="#555555" text-anchor="middle" textLength="24" lengthAdjust="spacingAndGlyphs" stroke="#555555" stroke-width="0.16">26.66</text>
<text x="464.3" y="349.5" font-size="9.5" fill="#555555" text-anchor="middle" textLength="24" lengthAdjust="spacingAndGlyphs" stroke="#555555" stroke-width="0.16">30.00</text>
<text x="498.3" y="364.5" font-size="9.5" fill="#555555" text-anchor="middle" textLength="24" lengthAdjust="spacingAndGlyphs" stroke="#555555" stroke-width="0.16">33.33</text>
<text x="517.3" y="408.5" font-size="9.5" fill="#555555" text-anchor="middle" textLength="24" lengthAdjust="spacingAndGlyphs" stroke="#555555" stroke-width="0.16">36.66</text>
<text x="498.3" y="454.5" font-size="9.5" fill="#555555" text-anchor="middle" textLength="24" lengthAdjust="spacingAndGlyphs" stroke="#555555" stroke-width="0.16">40.00</text>
<path d="M451.50 328.50 L470.12 404.10 L467.43 418.79 L459.88 405.90 Z" fill="#3c3c3c"/>
<circle cx="465" cy="405" r="1.2" fill="#888"/>
<text x="464" y="499.3" font-size="9.5" fill="#dcdcdc" text-anchor="middle" textLength="90.5" lengthAdjust="spacingAndGlyphs" stroke="#dcdcdc" stroke-width="0.16">26/03/2013 18:13:50</text>
<text x="610" y="504.5" font-size="9.5" fill="#dcdcdc" text-anchor="end" stroke="#dcdcdc" stroke-width="0.16">5</text>
<text x="626.5" y="295" font-size="9.5" fill="#dcdcdc" text-anchor="start" textLength="97" lengthAdjust="spacingAndGlyphs" stroke="#dcdcdc" stroke-width="0.16">000001 - Data_Centre</text>
<text x="923" y="295" font-size="9.5" fill="#dcdcdc" text-anchor="end" textLength="42.5" lengthAdjust="spacingAndGlyphs" stroke="#dcdcdc" stroke-width="0.16">A10 - A10</text>
<line x1="666.5" y1="321.5" x2="922.5" y2="321.5" stroke="#4c4c4c" stroke-width="1" stroke-dasharray="2 2.5"/>
<line x1="666.5" y1="339.5" x2="922.5" y2="339.5" stroke="#4c4c4c" stroke-width="1" stroke-dasharray="2 2.5"/>
<line x1="666.5" y1="357.5" x2="922.5" y2="357.5" stroke="#4c4c4c" stroke-width="1" stroke-dasharray="2 2.5"/>
<line x1="666.5" y1="376.5" x2="922.5" y2="376.5" stroke="#4c4c4c" stroke-width="1" stroke-dasharray="2 2.5"/>
<line x1="666.5" y1="394.5" x2="922.5" y2="394.5" stroke="#4c4c4c" stroke-width="1" stroke-dasharray="2 2.5"/>
<line x1="666.5" y1="412.5" x2="922.5" y2="412.5" stroke="#4c4c4c" stroke-width="1" stroke-dasharray="2 2.5"/>
<line x1="666.5" y1="430.5" x2="922.5" y2="430.5" stroke="#4c4c4c" stroke-width="1" stroke-dasharray="2 2.5"/>
<line x1="666.5" y1="449.5" x2="922.5" y2="449.5" stroke="#4c4c4c" stroke-width="1" stroke-dasharray="2 2.5"/>
<line x1="666.5" y1="467.5" x2="922.5" y2="467.5" stroke="#4c4c4c" stroke-width="1" stroke-dasharray="2 2.5"/>
<line x1="752.5" y1="303" x2="752.5" y2="485.8" stroke="#4c4c4c" stroke-width="1" stroke-dasharray="2 2.5"/>
<line x1="837.5" y1="303" x2="837.5" y2="485.8" stroke="#4c4c4c" stroke-width="1" stroke-dasharray="2 2.5"/>
<rect x="666.5" y="303.5" width="256" height="182" fill="none" stroke="#808080" stroke-width="1"/>
<rect x="666.5" y="359.5" width="256.0" height="2" fill="#ff0000"/>
<rect x="666.5" y="421.8" width="256.0" height="2" fill="#3a70e0"/>
<text x="627.6" y="310" font-size="9.5" fill="#dcdcdc" text-anchor="start" textLength="24" lengthAdjust="spacingAndGlyphs" stroke="#dcdcdc" stroke-width="0.16">42.00</text>
<text x="627.6" y="346" font-size="9.5" fill="#dcdcdc" text-anchor="start" textLength="24" lengthAdjust="spacingAndGlyphs" stroke="#dcdcdc" stroke-width="0.16">37.60</text>
<text x="627.6" y="382.7" font-size="9.5" fill="#dcdcdc" text-anchor="start" textLength="24" lengthAdjust="spacingAndGlyphs" stroke="#dcdcdc" stroke-width="0.16">33.20</text>
<text x="627.6" y="419.7" font-size="9.5" fill="#dcdcdc" text-anchor="start" textLength="24" lengthAdjust="spacingAndGlyphs" stroke="#dcdcdc" stroke-width="0.16">28.80</text>
<text x="627.6" y="456.4" font-size="9.5" fill="#dcdcdc" text-anchor="start" textLength="24" lengthAdjust="spacingAndGlyphs" stroke="#dcdcdc" stroke-width="0.16">24.40</text>
<text x="627.6" y="487" font-size="9.5" fill="#dcdcdc" text-anchor="start" textLength="24" lengthAdjust="spacingAndGlyphs" stroke="#dcdcdc" stroke-width="0.16">20.00</text>
<text x="627.6" y="373" font-size="10.5" fill="#ee0000" text-anchor="start" textLength="26.5" lengthAdjust="spacingAndGlyphs" stroke="#ee0000" stroke-width="0.16">35.00</text>
<text x="627.6" y="435.2" font-size="10.5" fill="#3a6ee8" text-anchor="start" textLength="26.5" lengthAdjust="spacingAndGlyphs" stroke="#3a6ee8" stroke-width="0.16">27.50</text>
<text x="666.5" y="500.2" font-size="9.5" fill="#dcdcdc" text-anchor="start" textLength="37" lengthAdjust="spacingAndGlyphs" stroke="#dcdcdc" stroke-width="0.16">17:25:31</text>
<text x="752.3" y="502.3" font-size="10.8" fill="#dcdcdc" text-anchor="start" textLength="41.3" lengthAdjust="spacingAndGlyphs" stroke="#dcdcdc" stroke-width="0.16">17:36:02</text>
<text x="837.8" y="502.3" font-size="10.8" fill="#dcdcdc" text-anchor="start" textLength="41.3" lengthAdjust="spacingAndGlyphs" stroke="#dcdcdc" stroke-width="0.16">17:41:39</text>
<text x="921" y="504" font-size="9.5" fill="#dcdcdc" text-anchor="end" stroke="#dcdcdc" stroke-width="0.16">6</text>
<rect x="864.2" y="306.7" width="55.5" height="28" fill="#5a5a5a"/>
<text x="891.95" y="329.09999999999997" font-size="22" fill="#f8f8f8" text-anchor="middle" textLength="52.5" lengthAdjust="spacingAndGlyphs">26.62</text>
<line x1="666.38" y1="414.42" x2="672.49" y2="414.42" stroke="#33cc33" stroke-width="1.1"/>
<line x1="672.49" y1="414.42" x2="678.96" y2="415.14" stroke="#33cc33" stroke-width="1.1"/>
<line x1="678.96" y1="415.14" x2="682.55" y2="437.41" stroke="#3a6ee0" stroke-width="1.1"/>
<line x1="682.55" y1="437.41" x2="686.86" y2="442.45" stroke="#3a6ee0" stroke-width="1.1"/>
<line x1="686.86" y1="442.45" x2="691.54" y2="442.45" stroke="#3a6ee0" stroke-width="1.1"/>
<line x1="691.54" y1="442.45" x2="695.85" y2="446.76" stroke="#3a6ee0" stroke-width="1.1"/>
<line x1="695.85" y1="446.76" x2="701.24" y2="446.76" stroke="#3a6ee0" stroke-width="1.1"/>
<line x1="701.24" y1="446.76" x2="708.42" y2="446.76" stroke="#3a6ee0" stroke-width="1.1"/>
<line x1="708.42" y1="446.76" x2="712.02" y2="411.54" stroke="#33cc33" stroke-width="1.1"/>
<line x1="712.02" y1="411.54" x2="717.41" y2="387.11" stroke="#33cc33" stroke-width="1.1"/>
<line x1="717.41" y1="387.11" x2="724.59" y2="404.36" stroke="#33cc33" stroke-width="1.1"/>
<line x1="724.59" y1="404.36" x2="729.27" y2="408.67" stroke="#33cc33" stroke-width="1.1"/>
<line x1="729.27" y1="408.67" x2="734.30" y2="412.26" stroke="#33cc33" stroke-width="1.1"/>
<line x1="734.30" y1="412.26" x2="738.97" y2="412.26" stroke="#33cc33" stroke-width="1.1"/>
<line x1="738.97" y1="412.26" x2="742.56" y2="413.34" stroke="#33cc33" stroke-width="1.1"/>
<line x1="742.56" y1="413.34" x2="747.23" y2="403.64" stroke="#33cc33" stroke-width="1.1"/>
<line x1="747.23" y1="403.64" x2="751.54" y2="397.17" stroke="#33cc33" stroke-width="1.1"/>
<line x1="751.54" y1="397.17" x2="755.14" y2="392.14" stroke="#33cc33" stroke-width="1.1"/>
<line x1="755.14" y1="392.14" x2="759.45" y2="394.66" stroke="#33cc33" stroke-width="1.1"/>
<line x1="759.45" y1="394.66" x2="764.12" y2="331.41" stroke="#ff2020" stroke-width="1.1"/>
<line x1="764.12" y1="331.41" x2="768.43" y2="357.64" stroke="#ff2020" stroke-width="1.1"/>
<line x1="768.43" y1="357.64" x2="773.10" y2="371.30" stroke="#33cc33" stroke-width="1.1"/>
<line x1="773.10" y1="371.30" x2="777.41" y2="379.92" stroke="#33cc33" stroke-width="1.1"/>
<line x1="777.41" y1="379.92" x2="781.01" y2="386.39" stroke="#33cc33" stroke-width="1.1"/>
<line x1="781.01" y1="386.39" x2="785.68" y2="391.78" stroke="#33cc33" stroke-width="1.1"/>
<line x1="785.68" y1="391.78" x2="789.99" y2="397.17" stroke="#33cc33" stroke-width="1.1"/>
<line x1="789.99" y1="397.17" x2="793.94" y2="401.48" stroke="#33cc33" stroke-width="1.1"/>
<line x1="793.94" y1="401.48" x2="798.26" y2="404.36" stroke="#33cc33" stroke-width="1.1"/>
<line x1="798.26" y1="404.36" x2="802.57" y2="406.15" stroke="#33cc33" stroke-width="1.1"/>
<line x1="802.57" y1="406.15" x2="807.24" y2="407.95" stroke="#33cc33" stroke-width="1.1"/>
<line x1="807.24" y1="407.95" x2="810.83" y2="410.11" stroke="#33cc33" stroke-width="1.1"/>
<line x1="810.83" y1="410.11" x2="815.50" y2="410.82" stroke="#33cc33" stroke-width="1.1"/>
<line x1="815.50" y1="410.82" x2="819.81" y2="413.34" stroke="#33cc33" stroke-width="1.1"/>
<line x1="819.81" y1="413.34" x2="824.13" y2="410.82" stroke="#33cc33" stroke-width="1.1"/>
<line x1="824.13" y1="410.82" x2="827.72" y2="405.08" stroke="#33cc33" stroke-width="1.1"/>
<line x1="827.72" y1="405.08" x2="832.39" y2="403.64" stroke="#33cc33" stroke-width="1.1"/>
<line x1="832.39" y1="403.64" x2="837.06" y2="409.75" stroke="#33cc33" stroke-width="1.1"/>
<line x1="837.06" y1="409.75" x2="841.37" y2="414.42" stroke="#33cc33" stroke-width="1.1"/>
<line x1="841.37" y1="414.42" x2="844.97" y2="416.93" stroke="#33cc33" stroke-width="1.1"/>
<line x1="844.97" y1="416.93" x2="849.28" y2="418.73" stroke="#33cc33" stroke-width="1.1"/>
<line x1="849.28" y1="418.73" x2="853.95" y2="421.60" stroke="#33cc33" stroke-width="1.1"/>
<line x1="853.95" y1="421.60" x2="858.62" y2="422.32" stroke="#33cc33" stroke-width="1.1"/>
<line x1="858.62" y1="422.32" x2="862.93" y2="423.40" stroke="#3a6ee0" stroke-width="1.1"/>
<line x1="862.93" y1="423.40" x2="866.53" y2="424.48" stroke="#3a6ee0" stroke-width="1.1"/>
<line x1="866.53" y1="424.48" x2="871.20" y2="425.20" stroke="#3a6ee0" stroke-width="1.1"/>
<line x1="871.20" y1="425.20" x2="875.51" y2="428.79" stroke="#3a6ee0" stroke-width="1.1"/>
<line x1="875.51" y1="428.79" x2="880.90" y2="429.51" stroke="#3a6ee0" stroke-width="1.1"/>
<line x1="880.90" y1="429.51" x2="885.21" y2="429.51" stroke="#3a6ee0" stroke-width="1.1"/>
<line x1="885.21" y1="429.51" x2="889.88" y2="430.23" stroke="#3a6ee0" stroke-width="1.1"/>
<line x1="889.88" y1="430.23" x2="894.20" y2="430.23" stroke="#3a6ee0" stroke-width="1.1"/>
<line x1="894.20" y1="430.23" x2="898.87" y2="430.59" stroke="#3a6ee0" stroke-width="1.1"/>
<line x1="898.87" y1="430.59" x2="903.18" y2="431.31" stroke="#3a6ee0" stroke-width="1.1"/>
<line x1="903.18" y1="431.31" x2="907.85" y2="430.59" stroke="#3a6ee0" stroke-width="1.1"/>
<line x1="907.85" y1="430.59" x2="912.52" y2="430.59" stroke="#3a6ee0" stroke-width="1.1"/>
<line x1="912.52" y1="430.59" x2="918.63" y2="430.59" stroke="#3a6ee0" stroke-width="1.1"/>
<circle cx="666.38" cy="414.42" r="1.5" fill="#33cc33"/>
<circle cx="672.49" cy="414.42" r="1.5" fill="#33cc33"/>
<circle cx="678.96" cy="415.14" r="1.5" fill="#33cc33"/>
<circle cx="682.55" cy="437.41" r="1.5" fill="#3a6ee0"/>
<circle cx="686.86" cy="442.45" r="1.5" fill="#3a6ee0"/>
<circle cx="691.54" cy="442.45" r="1.5" fill="#3a6ee0"/>
<circle cx="695.85" cy="446.76" r="1.5" fill="#3a6ee0"/>
<circle cx="701.24" cy="446.76" r="1.5" fill="#3a6ee0"/>
<circle cx="708.42" cy="446.76" r="1.5" fill="#3a6ee0"/>
<circle cx="712.02" cy="411.54" r="1.5" fill="#33cc33"/>
<circle cx="717.41" cy="387.11" r="1.5" fill="#33cc33"/>
<circle cx="724.59" cy="404.36" r="1.5" fill="#33cc33"/>
<circle cx="729.27" cy="408.67" r="1.5" fill="#33cc33"/>
<circle cx="734.30" cy="412.26" r="1.5" fill="#33cc33"/>
<circle cx="738.97" cy="412.26" r="1.5" fill="#33cc33"/>
<circle cx="742.56" cy="413.34" r="1.5" fill="#33cc33"/>
<circle cx="747.23" cy="403.64" r="1.5" fill="#33cc33"/>
<circle cx="751.54" cy="397.17" r="1.5" fill="#33cc33"/>
<circle cx="755.14" cy="392.14" r="1.5" fill="#33cc33"/>
<circle cx="759.45" cy="394.66" r="1.5" fill="#33cc33"/>
<circle cx="764.12" cy="331.41" r="1.5" fill="#ff2020"/>
<circle cx="768.43" cy="357.64" r="1.5" fill="#ff2020"/>
<circle cx="773.10" cy="371.30" r="1.5" fill="#33cc33"/>
<circle cx="777.41" cy="379.92" r="1.5" fill="#33cc33"/>
<circle cx="781.01" cy="386.39" r="1.5" fill="#33cc33"/>
<circle cx="785.68" cy="391.78" r="1.5" fill="#33cc33"/>
<circle cx="789.99" cy="397.17" r="1.5" fill="#33cc33"/>
<circle cx="793.94" cy="401.48" r="1.5" fill="#33cc33"/>
<circle cx="798.26" cy="404.36" r="1.5" fill="#33cc33"/>
<circle cx="802.57" cy="406.15" r="1.5" fill="#33cc33"/>
<circle cx="807.24" cy="407.95" r="1.5" fill="#33cc33"/>
<circle cx="810.83" cy="410.11" r="1.5" fill="#33cc33"/>
<circle cx="815.50" cy="410.82" r="1.5" fill="#33cc33"/>
<circle cx="819.81" cy="413.34" r="1.5" fill="#33cc33"/>
<circle cx="824.13" cy="410.82" r="1.5" fill="#33cc33"/>
<circle cx="827.72" cy="405.08" r="1.5" fill="#33cc33"/>
<circle cx="832.39" cy="403.64" r="1.5" fill="#33cc33"/>
<circle cx="837.06" cy="409.75" r="1.5" fill="#33cc33"/>
<circle cx="841.37" cy="414.42" r="1.5" fill="#33cc33"/>
<circle cx="844.97" cy="416.93" r="1.5" fill="#33cc33"/>
<circle cx="849.28" cy="418.73" r="1.5" fill="#33cc33"/>
<circle cx="853.95" cy="421.60" r="1.5" fill="#33cc33"/>
<circle cx="858.62" cy="422.32" r="1.5" fill="#33cc33"/>
<circle cx="862.93" cy="423.40" r="1.5" fill="#3a6ee0"/>
<circle cx="866.53" cy="424.48" r="1.5" fill="#3a6ee0"/>
<circle cx="871.20" cy="425.20" r="1.5" fill="#3a6ee0"/>
<circle cx="875.51" cy="428.79" r="1.5" fill="#3a6ee0"/>
<circle cx="880.90" cy="429.51" r="1.5" fill="#3a6ee0"/>
<circle cx="885.21" cy="429.51" r="1.5" fill="#3a6ee0"/>
<circle cx="889.88" cy="430.23" r="1.5" fill="#3a6ee0"/>
<circle cx="894.20" cy="430.23" r="1.5" fill="#3a6ee0"/>
<circle cx="898.87" cy="430.59" r="1.5" fill="#3a6ee0"/>
<circle cx="903.18" cy="431.31" r="1.5" fill="#3a6ee0"/>
<circle cx="907.85" cy="430.59" r="1.5" fill="#3a6ee0"/>
<circle cx="912.52" cy="430.59" r="1.5" fill="#3a6ee0"/>
<circle cx="918.63" cy="430.59" r="1.5" fill="#3a6ee0"/>
<text x="7.5" y="523" font-size="9.5" fill="#dcdcdc" text-anchor="start" textLength="97" lengthAdjust="spacingAndGlyphs" stroke="#dcdcdc" stroke-width="0.16">000001 - Data_Centre</text>
<text x="302.5" y="523" font-size="9.5" fill="#dcdcdc" text-anchor="end" textLength="42.5" lengthAdjust="spacingAndGlyphs" stroke="#dcdcdc" stroke-width="0.16">A11 - A11</text>
<rect x="244" y="535" width="55.5" height="28" fill="#5a5a5a"/>
<text x="271.75" y="557.4" font-size="22" fill="#f8f8f8" text-anchor="middle" textLength="52.5" lengthAdjust="spacingAndGlyphs">28.31</text>
<circle cx="155" cy="622.3" r="87" fill="url(#gcomp)"/>
<circle cx="155" cy="622.3" r="75.6" fill="#ffffff"/>
<line x1="182.17" y1="556.70" x2="181.02" y2="559.48" stroke="#444" stroke-width="1"/>
<line x1="205.20" y1="572.10" x2="203.08" y2="574.22" stroke="#444" stroke-width="1"/>
<line x1="220.60" y1="595.13" x2="217.82" y2="596.28" stroke="#444" stroke-width="1"/>
<line x1="220.60" y1="649.47" x2="217.82" y2="648.32" stroke="#444" stroke-width="1"/>
<line x1="205.20" y1="672.50" x2="203.08" y2="670.38" stroke="#444" stroke-width="1"/>
<line x1="182.17" y1="687.90" x2="181.02" y2="685.12" stroke="#444" stroke-width="1"/>
<line x1="127.83" y1="687.90" x2="128.98" y2="685.12" stroke="#444" stroke-width="1"/>
<line x1="104.80" y1="672.50" x2="106.92" y2="670.38" stroke="#444" stroke-width="1"/>
<line x1="89.40" y1="649.47" x2="92.18" y2="648.32" stroke="#444" stroke-width="1"/>
<line x1="89.40" y1="595.13" x2="92.18" y2="596.28" stroke="#444" stroke-width="1"/>
<line x1="104.80" y1="572.10" x2="106.92" y2="574.22" stroke="#444" stroke-width="1"/>
<line x1="127.83" y1="556.70" x2="128.98" y2="559.48" stroke="#444" stroke-width="1"/>
<text x="155" y="558" font-size="9.5" fill="#505050" text-anchor="middle" stroke="#505050" stroke-width="0.16">N</text>
<text x="156.7" y="694" font-size="9.5" fill="#505050" text-anchor="middle" stroke="#505050" stroke-width="0.16">S</text>
<text x="85" y="629.5" font-size="9.5" fill="#505050" text-anchor="middle" stroke="#505050" stroke-width="0.16">W</text>
<text x="226.7" y="629.5" font-size="9.5" fill="#505050" text-anchor="middle" stroke="#505050" stroke-width="0.16">E</text>
<path d="M187.40 561.10 Q173.86 593.33 158.39 624.50 L148.20 634.60 L149.61 619.70 Q167.54 589.87 187.40 561.10 Z" fill="#353535"/>
<circle cx="154.0" cy="622.1" r="1.8" fill="#444" stroke="#aaa" stroke-width="0.6"/>
<text x="154.5" y="727.5" font-size="9.5" fill="#dcdcdc" text-anchor="middle" textLength="90.5" lengthAdjust="spacingAndGlyphs" stroke="#dcdcdc" stroke-width="0.16">26/03/2013 18:13:50</text>
<text x="301" y="732" font-size="9.5" fill="#dcdcdc" text-anchor="end" stroke="#dcdcdc" stroke-width="0.16">7</text>
<text x="316.5" y="523" font-size="9.5" fill="#dcdcdc" text-anchor="start" textLength="97" lengthAdjust="spacingAndGlyphs" stroke="#dcdcdc" stroke-width="0.16">000001 - Data_Centre</text>
<text x="611.7" y="523" font-size="9.5" fill="#dcdcdc" text-anchor="end" textLength="42.5" lengthAdjust="spacingAndGlyphs" stroke="#dcdcdc" stroke-width="0.16">A12 - A12</text>
<line x1="356" y1="549.5" x2="612" y2="549.5" stroke="#4c4c4c" stroke-width="1" stroke-dasharray="2 2.5"/>
<line x1="356" y1="567.5" x2="612" y2="567.5" stroke="#4c4c4c" stroke-width="1" stroke-dasharray="2 2.5"/>
<line x1="356" y1="586.5" x2="612" y2="586.5" stroke="#4c4c4c" stroke-width="1" stroke-dasharray="2 2.5"/>
<line x1="356" y1="604.5" x2="612" y2="604.5" stroke="#4c4c4c" stroke-width="1" stroke-dasharray="2 2.5"/>
<line x1="356" y1="622.5" x2="612" y2="622.5" stroke="#4c4c4c" stroke-width="1" stroke-dasharray="2 2.5"/>
<line x1="356" y1="641.5" x2="612" y2="641.5" stroke="#4c4c4c" stroke-width="1" stroke-dasharray="2 2.5"/>
<line x1="356" y1="659.5" x2="612" y2="659.5" stroke="#4c4c4c" stroke-width="1" stroke-dasharray="2 2.5"/>
<line x1="356" y1="677.5" x2="612" y2="677.5" stroke="#4c4c4c" stroke-width="1" stroke-dasharray="2 2.5"/>
<line x1="356" y1="696.5" x2="612" y2="696.5" stroke="#4c4c4c" stroke-width="1" stroke-dasharray="2 2.5"/>
<line x1="441.5" y1="531" x2="441.5" y2="714.5" stroke="#4c4c4c" stroke-width="1" stroke-dasharray="2 2.5"/>
<line x1="526.5" y1="531" x2="526.5" y2="714.5" stroke="#4c4c4c" stroke-width="1" stroke-dasharray="2 2.5"/>
<rect x="356.5" y="531.5" width="256" height="183" fill="none" stroke="#808080" stroke-width="1"/>
<path d="M356.00 714.5 L356.00 598.33 L358.33 595.00 L361.67 594.33 L364.33 595.67 L364.33 714.5 Z" fill="#800000"/>
<path d="M364.33 714.5 L364.33 595.67 L366.67 608.33 L370.00 621.67 L375.00 631.67 L380.00 636.67 L382.00 637.33 L382.00 714.5 Z" fill="#33cc33"/>
<path d="M382.00 714.5 L382.00 637.33 L388.33 640.00 L395.00 649.33 L401.67 649.33 L428.33 648.33 L438.33 646.67 L445.00 645.00 L461.67 643.33 L484.00 641.67 L484.00 714.5 Z" fill="#3a6ee0"/>
<path d="M484.00 714.5 L484.00 637.67 L488.33 636.00 L505.00 636.00 L521.67 635.00 L528.33 631.67 L531.67 628.33 L535.00 633.33 L545.00 636.67 L577.67 636.67 L577.67 714.5 Z" fill="#33cc33"/>
<path d="M577.67 714.5 L577.67 638.50 L581.00 646.00 L583.50 652.33 L590.50 652.33 L590.50 714.5 Z" fill="#3a6ee0"/>
<path d="M590.50 714.5 L590.50 652.33 L595.30 625.67 L598.10 628.50 L603.80 611.20 L608.30 611.20 L608.30 714.5 Z" fill="#33cc33"/>
<rect x="356" y="604.8" width="256" height="1.8" fill="#900000"/>
<rect x="356" y="637.5" width="256" height="1.8" fill="#3a70e0"/>
<text x="317.5" y="537.8" font-size="9.5" fill="#dcdcdc" text-anchor="start" textLength="24" lengthAdjust="spacingAndGlyphs" stroke="#dcdcdc" stroke-width="0.16">37.00</text>
<text x="317.5" y="574.2" font-size="9.5" fill="#dcdcdc" text-anchor="start" textLength="24" lengthAdjust="spacingAndGlyphs" stroke="#dcdcdc" stroke-width="0.16">33.60</text>
<text x="317.5" y="610.2" font-size="9.5" fill="#dcdcdc" text-anchor="start" textLength="24" lengthAdjust="spacingAndGlyphs" stroke="#dcdcdc" stroke-width="0.16">30.20</text>
<text x="317.5" y="646.8" font-size="9.5" fill="#dcdcdc" text-anchor="start" textLength="24" lengthAdjust="spacingAndGlyphs" stroke="#dcdcdc" stroke-width="0.16">26.80</text>
<text x="317.5" y="683.5" font-size="9.5" fill="#dcdcdc" text-anchor="start" textLength="24" lengthAdjust="spacingAndGlyphs" stroke="#dcdcdc" stroke-width="0.16">23.40</text>
<text x="317.5" y="714.5" font-size="9.5" fill="#dcdcdc" text-anchor="start" textLength="24" lengthAdjust="spacingAndGlyphs" stroke="#dcdcdc" stroke-width="0.16">20.00</text>
<text x="317.5" y="618.2" font-size="10.5" fill="#900000" text-anchor="start" textLength="26.5" lengthAdjust="spacingAndGlyphs" stroke="#900000" stroke-width="0.16">30.00</text>
<text x="317.5" y="650.6" font-size="10.5" fill="#3a6ee8" text-anchor="start" textLength="26.5" lengthAdjust="spacingAndGlyphs" stroke="#3a6ee8" stroke-width="0.16">27.00</text>
<text x="356.5" y="729" font-size="9.5" fill="#dcdcdc" text-anchor="start" textLength="37.5" lengthAdjust="spacingAndGlyphs" stroke="#dcdcdc" stroke-width="0.16">17:48:39</text>
<text x="441.5" y="730.3" font-size="10.8" fill="#dcdcdc" text-anchor="start" textLength="41" lengthAdjust="spacingAndGlyphs" stroke="#dcdcdc" stroke-width="0.16">17:51:26</text>
<text x="526.5" y="730.3" font-size="10.8" fill="#dcdcdc" text-anchor="start" textLength="41.5" lengthAdjust="spacingAndGlyphs" stroke="#dcdcdc" stroke-width="0.16">17:53:27</text>
<text x="610" y="732" font-size="9.5" fill="#dcdcdc" text-anchor="end" stroke="#dcdcdc" stroke-width="0.16">8</text>
<rect x="553.5" y="535" width="55.5" height="28" fill="#5a5a5a"/>
<text x="581.25" y="557.4" font-size="22" fill="#f8f8f8" text-anchor="middle" textLength="52.5" lengthAdjust="spacingAndGlyphs">29.50</text>
<text x="626.5" y="523" font-size="9.5" fill="#dcdcdc" text-anchor="start" textLength="97" lengthAdjust="spacingAndGlyphs" stroke="#dcdcdc" stroke-width="0.16">000001 - Data_Centre</text>
<text x="923" y="523" font-size="9.5" fill="#dcdcdc" text-anchor="end" textLength="42.5" lengthAdjust="spacingAndGlyphs" stroke="#dcdcdc" stroke-width="0.16">A13 - A13</text>
<rect x="627.6" y="530.9" width="13.5" height="13.3" fill="#ff0000"/>
<text x="643.6" y="541.4" font-size="9.5" fill="#dcdcdc" text-anchor="start" textLength="46" lengthAdjust="spacingAndGlyphs" stroke="#dcdcdc" stroke-width="0.16">(H) : 30.00</text>
<rect x="627.6" y="546.3" width="13.5" height="13.3" fill="#3a6ee0"/>
<text x="643.6" y="556.8" font-size="9.5" fill="#dcdcdc" text-anchor="start" textLength="46" lengthAdjust="spacingAndGlyphs" stroke="#dcdcdc" stroke-width="0.16">(L) : 23.00</text>
<rect x="864.2" y="535.5" width="55.5" height="28" fill="#5a5a5a"/>
<text x="891.95" y="557.9" font-size="22" fill="#f8f8f8" text-anchor="middle" textLength="52.5" lengthAdjust="spacingAndGlyphs">29.56</text>
<rect x="760.5" y="530.2" width="28.8" height="90" fill="#ff0000"/>
<rect x="760.5" y="620" width="28.8" height="63.6" fill="#33cc33"/>
<rect x="760.5" y="683.6" width="28.8" height="27" fill="#3a6ee0"/>
<rect x="760.5" y="530.1" width="28.8" height="1.6" fill="#ffffff"/>
<rect x="760.5" y="559.2" width="28.8" height="1.6" fill="#ffffff"/>
<rect x="760.5" y="589.4000000000001" width="28.8" height="1.6" fill="#ffffff"/>
<rect x="760.5" y="619.2" width="28.8" height="1.6" fill="#ffffff"/>
<rect x="760.5" y="649.0" width="28.8" height="1.6" fill="#ffffff"/>
<rect x="760.5" y="679.5" width="28.8" height="1.6" fill="#ffffff"/>
<rect x="760.5" y="709.0" width="28.8" height="1.6" fill="#ffffff"/>
<rect x="797.8" y="528.4" width="2.6" height="184.3" fill="#ffffff"/>
<path d="M767.7 621.8 H796.5 V627.2 H770 Z" fill="#5a1a6a"/>
<text x="729.3" y="537.3" font-size="9.5" fill="#f0f0f0" text-anchor="start" textLength="24" lengthAdjust="spacingAndGlyphs" stroke="#f0f0f0" stroke-width="0.16">40.00</text>
<text x="729.3" y="567.2" font-size="9.5" fill="#f0f0f0" text-anchor="start" textLength="24" lengthAdjust="spacingAndGlyphs" stroke="#f0f0f0" stroke-width="0.16">36.66</text>
<text x="729.3" y="597.4" font-size="9.5" fill="#f0f0f0" text-anchor="start" textLength="24" lengthAdjust="spacingAndGlyphs" stroke="#f0f0f0" stroke-width="0.16">33.33</text>
<text x="729.3" y="627.2" font-size="9.5" fill="#f0f0f0" text-anchor="start" textLength="24" lengthAdjust="spacingAndGlyphs" stroke="#f0f0f0" stroke-width="0.16">30.00</text>
<text x="729.3" y="657" font-size="9.5" fill="#f0f0f0" text-anchor="start" textLength="24" lengthAdjust="spacingAndGlyphs" stroke="#f0f0f0" stroke-width="0.16">26.66</text>
<text x="729.3" y="687.6" font-size="9.5" fill="#f0f0f0" text-anchor="start" textLength="24" lengthAdjust="spacingAndGlyphs" stroke="#f0f0f0" stroke-width="0.16">23.33</text>
<text x="729.3" y="713.4" font-size="9.5" fill="#f0f0f0" text-anchor="start" textLength="24" lengthAdjust="spacingAndGlyphs" stroke="#f0f0f0" stroke-width="0.16">20.00</text>
<text x="729.3" y="727.8" font-size="9.5" fill="#dcdcdc" text-anchor="start" textLength="90.5" lengthAdjust="spacingAndGlyphs" stroke="#dcdcdc" stroke-width="0.16">26/03/2013 18:13:50</text>
<text x="921" y="732" font-size="9.5" fill="#dcdcdc" text-anchor="end" stroke="#dcdcdc" stroke-width="0.16">9</text>
<circle cx="16.5" cy="758.5" r="6.3" fill="none" stroke="#3a78e0" stroke-width="1.6"/>
<path d="M16.5 754.5 V758.8 H19.5" fill="none" stroke="#3a78e0" stroke-width="1.3"/>
<text x="37.5" y="762" font-size="9.5" fill="#dcdcdc" text-anchor="start" textLength="87.5" lengthAdjust="spacingAndGlyphs" stroke="#dcdcdc" stroke-width="0.16">26/03/2013 18:23:10</text>
<circle cx="173.5" cy="758.5" r="7.5" fill="url(#gglobe)"/>
<text x="187.5" y="762" font-size="9.5" fill="#dcdcdc" text-anchor="start" textLength="50" lengthAdjust="spacingAndGlyphs" stroke="#dcdcdc" stroke-width="0.16">Direct Mode</text>
<text x="483.6" y="760.8" font-size="12.5" fill="#f4f4f4" text-anchor="start" font-weight="bold" textLength="35.8" lengthAdjust="spacingAndGlyphs">Page 1</text>
<path d="M815.8 748.3 Q831 745.5 843.5 756.5 Q831 749.5 818.5 749.8 Z" fill="#e8e8e8"/>
<path d="M818.5 751.8 Q830 750.5 838 756.5" fill="none" stroke="#d0d0d0" stroke-width="1.1"/>
<text x="825.5" y="762.8" font-size="9.5" fill="#f0f0f0" text-anchor="start" font-weight="bold" textLength="53" lengthAdjust="spacingAndGlyphs" font-style="italic" font-family="Liberation Serif">EaseMind</text>
<text x="891.5" y="762" font-size="9.5" fill="#dcdcdc" text-anchor="start" textLength="58.5" lengthAdjust="spacingAndGlyphs" stroke="#dcdcdc" stroke-width="0.16">Version : 2.3.6</text>
</svg></body></html>
